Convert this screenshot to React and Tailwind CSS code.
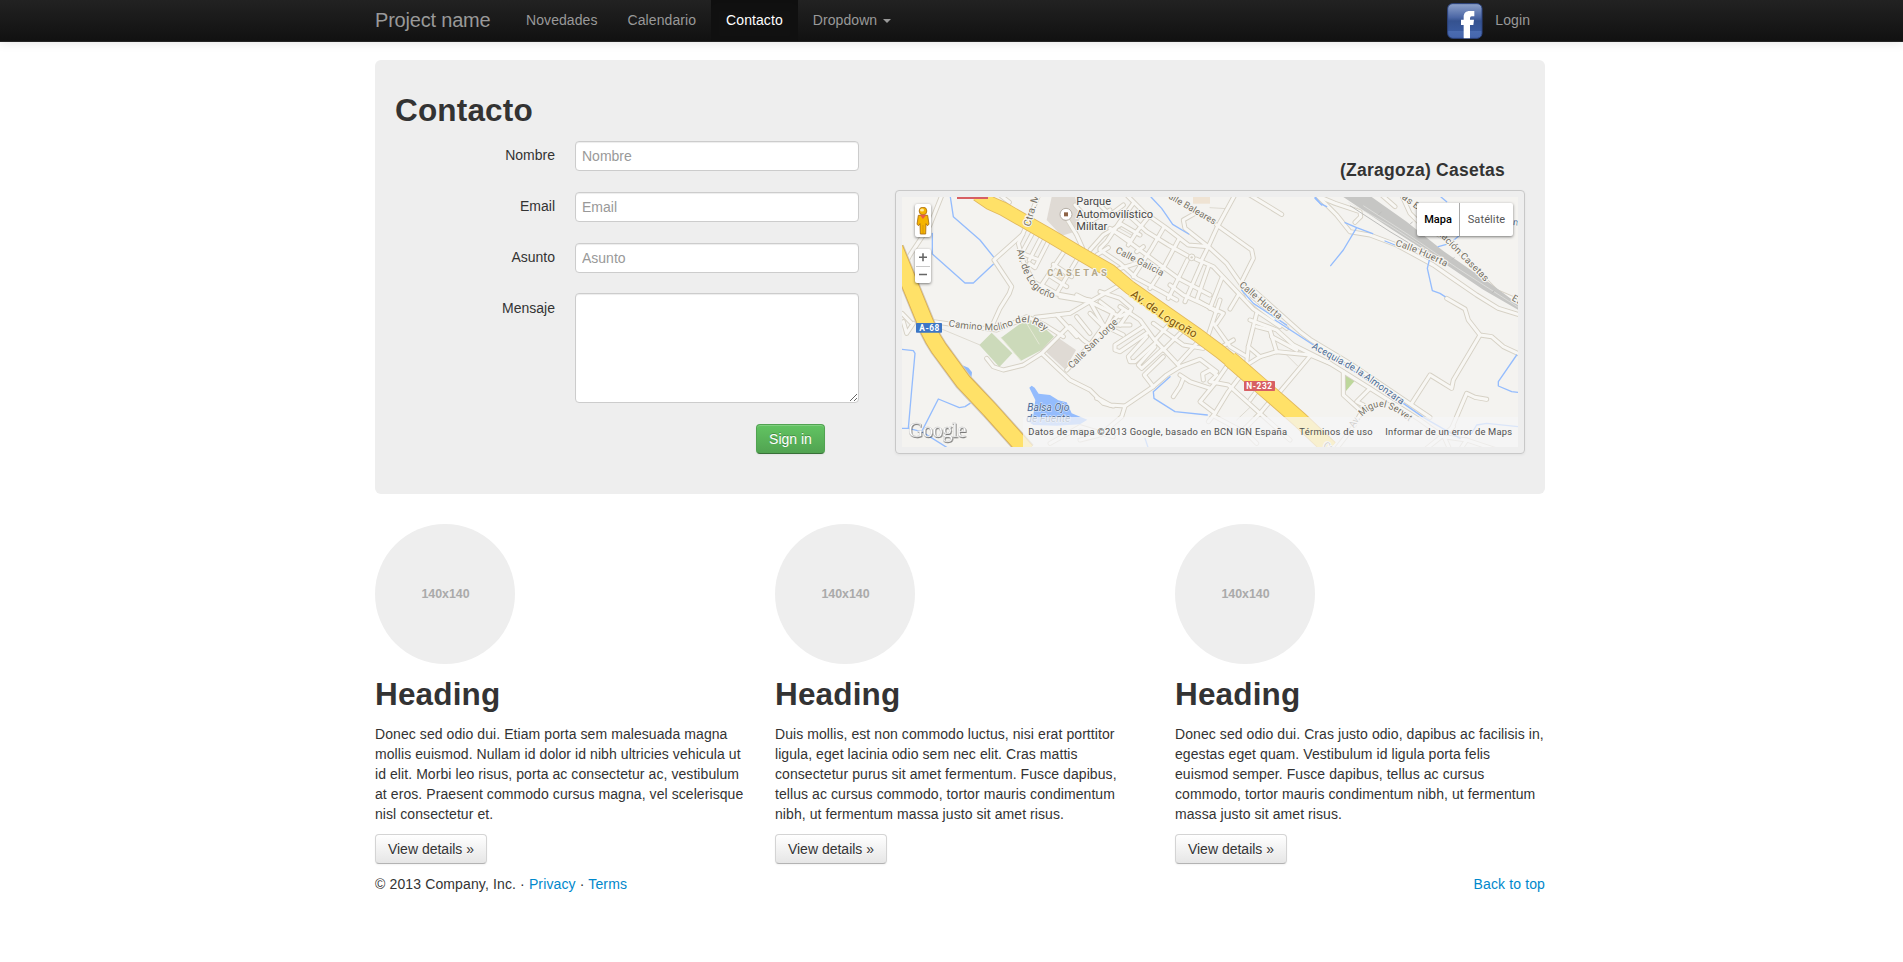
import React from "react";

/* Map geometry: [x offset, y offset, path], three units to a pixel. */
const ROADS = [
  [0, 0, "M160,20 L120,120 L60,210 L40,250"],
  [0, 0, "M398,148 L312,225 L365,305 L358,325 L330,370 L305,425"],
  [0, 0, "M450,20 L398,148 L385,175 L400,230 L430,290 L490,325 L600,345"],
  [0, 0, "M330,30 L358,52"],
  [0, 0, "M430,140 L395,205 L440,222"],
  [0, 0, "M452,160 L418,225"],
  [0, 0, "M475,170 L435,248 L418,236"],
  [0, 0, "M522,200 L455,300 L500,325 L560,225"],
  [0, 0, "M490,238 L545,275"],
  [0, 0, "M475,270 L530,305"],
  [0, 0, "M530,100 L560,150 L578,190 L580,215"],
  [0, 0, "M555,60 L600,110 L660,75"],
  [0, 0, "M600,195 L640,150 L690,120"],
  [0, 0, "M620,210 L655,188"],
  [0, 0, "M600,350 L690,300"],
  [0, 0, "M510,335 L600,350 L540,385 L437,397"],
  [0, 0, "M600,350 L690,395 L720,380"],
  [0, 0, "M600,350 L640,420 L700,450"],
  [0, 0, "M560,330 L640,370"],
  [0, 0, "M36,385 L62,412"],
  [0, 405, "M130,5 L200,15 L320,30 L380,5 L410,-10 L465,15 L520,50"],
  [0, 405, "M290,115 L310,140 L340,150 L400,135 L455,100 L495,60 L530,25"],
  [0, 405, "M455,100 L540,180 L600,210 L640,250 L670,258"],
  [0, 405, "M530,150 L600,75 L700,-30"],
  [0, 405, "M40,5 L50,40 L70,10"],
  [0, 405, "M540,20 L580,60 L600,75"],
  [0, 405, "M560,-10 L600,40 M600,-20 L640,20 L600,75"],
  [0, 405, "M500,-15 L560,50"],
  [630, 0, "M410,20 L350,130 L325,185 L305,225"],
  [630, 0, "M325,185 L255,130 L250,105 L285,85"],
  [630, 0, "M350,120 L455,195 L460,220 L425,290"],
  [630, 0, "M325,185 L380,235 L425,300 L445,340 L480,370 L560,430"],
  [630, 0, "M450,30 L545,88"],
  [630, 0, "M70,20 L130,80 L200,130 L265,180 L325,185"],
  [630, 0, "M85,90 L140,140 L205,180 L262,212 M288,222 L340,245 L425,335 L460,372 L540,425"],
  [630, 0, "M30,130 L100,180 L160,225 L235,280 L330,330"],
  [630, 0, "M0,195 L60,235 L110,280 L185,320 L230,345"],
  [630, 0, "M100,55 L60,110 L20,170 L0,190"],
  [630, 0, "M150,90 L110,140 L85,180"],
  [630, 0, "M190,130 L155,190 L100,275"],
  [630, 0, "M238,160 L195,240 L150,310"],
  [630, 0, "M262,225 L240,270 L205,340"],
  [630, 0, "M305,235 L270,315 L255,350"],
  [630, 0, "M325,245 L290,345 L350,380"],
  [630, 0, "M365,280 L330,370"],
  [630, 0, "M415,330 L390,372"],
  [630, 0, "M210,300 L250,330 L370,385 L350,415"],
  [630, 0, "M45,140 L90,165 M60,115 L120,150"],
  [630, 0, "M110,200 L130,185"],
  [630, 0, "M0,320 L60,340 L95,370 L60,420"],
  [630, 0, "M0,350 L40,380 L20,420 L90,420"],
  [630, 0, "M30,260 L110,235"],
  [630, 0, "M0,60 L30,90 L70,60"],
  [1260, 0, "M20,30 L80,90 L120,140 L180,150 L260,180 L370,240 L420,275 L500,330 L565,370 L630,390"],
  [1260, 0, "M30,36 L75,55 L150,80 L152,95 L135,112"],
  [1260, 0, "M215,30 L255,65"],
  [1260, 0, "M275,30 L300,85 L330,115 L420,170 L520,280 L560,320 L630,350"],
  [1260, 0, "M410,340 L465,372 L475,405 L510,450 L545,455 L580,485 L630,508"],
  [1260, 405, "M510,45 L430,180 L425,205 L360,165 L305,250"],
  [1260, 405, "M425,325 L470,220 L495,232 L530,238"],
  [1260, 405, "M-170,-90 L-30,35 L0,58 L120,130 L360,292"],
  [1260, 405, "M-180,0 L-100,30 L-50,75 L60,130 L100,155 L180,205 L330,300 L400,350 L470,360 L560,390"],
  [1260, 405, "M100,155 L100,225 L155,275 L130,320 L80,385"],
  [1260, 405, "M180,205 L140,245 L160,255"],
  [1260, 405, "M400,345 L430,320 M350,385 L400,345 L420,390 M470,360 L450,390"],
  [630, 405, "M440,135 L480,110 L530,95 L630,105 L690,130"],
  [630, 405, "M470,-20 L445,80 L440,130"],
  [630, 405, "M445,80 L480,110 M470,20 L510,30 L530,95"],
  [630, 405, "M515,50 L590,90"],
  [630, 405, "M630,108 L540,215"],
  [630, 405, "M60,-40 L120,0 L160,55 L240,140 L300,118 L350,155"],
  [630, 405, "M240,165 L270,185 L330,205"],
  [630, 405, "M310,180 L308,162 L330,150 L350,165 L330,185 L385,195 L480,280 L570,360"],
  [630, 405, "M390,125 L345,190 L300,245 L345,280 L325,305"],
  [630, 405, "M435,150 L385,215 L345,280"],
  [630, 405, "M530,220 L480,280 L430,330 L470,370"],
  [630, 405, "M480,200 L450,240"],
  [630, 405, "M345,290 L420,330"],
  [630, 405, "M250,175 L240,200 L220,230"],
  [630, 405, "M240,140 L200,165 L160,200 L75,258 L30,255 L0,238 L-10,235"],
  [630, 405, "M160,200 L133,165 L190,110"],
  [630, 405, "M130,20 L45,75 L45,90 L60,95 L140,40"],
  [630, 405, "M140,50 L85,110 L90,125 L105,125 L165,70"],
  [630, 405, "M165,80 L115,135 L125,145 L185,90"],
  [630, 405, "M215,5 L165,60 M250,30 L190,90 M290,70 L235,130"],
  [630, 405, "M160,10 L250,75 L310,85"],
  [630, 405, "M360,-60 L320,60"],
  [630, 405, "M400,60 L350,90 M340,10 L390,80 L440,110"],
  [630, 405, "M75,258 L65,290 L0,345 L-60,360"],
  [630, 405, "M-150,370 L-60,320 L40,350"],
];

const THIN = [
  [630, 0, "M330,68 L380,71"],
  [630, 0, "M50,125 L95,150 M56,118 L100,142"],
  [630, 405, "M550,95 L592,137"],
  [630, 405, "M410,300 L450,262"],
  [0, 405, "M150,25 L270,75"],
];

const WATER = [
  [0, 0, "M181,36 L190,95 L270,165 L310,215 M310,238 L250,294 L225,294 L127,207 L127,145"],
  [0, 405, "M36,88 L70,92 L75,100 L65,210 L55,325 L36,325 M55,325 L95,335 M240,250 L225,260 L208,263 L145,237 L95,335 L170,382"],
  [630, 0, "M153,36 L185,70 L218,118 L266,147"],
  [630, 0, "M645,36 L665,60"],
  [630, 0, "M425,315 L460,355 L560,420"],
  [1260, 0, "M15,40 L30,55 L50,65 M105,113 L140,128 L188,146 M140,128 L100,195 L62,242 M225,168 L255,180"],
  [1260, 0, "M358,225 L352,250 L367,317 L390,325 L405,335 M385,185 L420,175 L450,150 M393,36 L410,50"],
  [1260, 405, "M620,105 L565,185 L565,198 L605,215 L625,217 M-105,0 L280,250 L340,292 L450,355 M485,340 L500,315 L530,310 L625,320"],
  [630, 405, "M210,170 L160,215 L162,235 L225,275 L322,285 M135,355 L145,385"],
];

function Lines({ list, stroke, width }) {
  return (
    <g fill="none" stroke={stroke} strokeWidth={width} strokeLinejoin="round" strokeLinecap="round">
      {list.map(([x, y, d], i) => (
        <path key={i} d={d} transform={`translate(${x} ${y})`} />
      ))}
    </g>
  );
}

function PathLabel({ id, d, length, children, size = 30, fill = "#746f62", weight = 400, halo = "#f6f5f2" }) {
  return (
    <>
      <path id={id} d={d} fill="none" />
      <text
        fontSize={size}
        fontWeight={weight}
        fill={fill}
        stroke={halo}
        strokeWidth="7"
        strokeLinejoin="round"
        paintOrder="stroke"
        textLength={length}
        lengthAdjust="spacingAndGlyphs"
      >
        <textPath href={`#${id}`}>{children}</textPath>
      </text>
    </>
  );
}

const HIGHWAY = "M262,28 L300,54 L340,72 L480,152 L560,200 L660,258 L720,308 L830,385 L920,448 L990,500 L1070,565";
const HIGHWAY_END = "M1020,522 L1070,565 L1110,600 L1170,652 L1230,705 L1320,790";
const A68 = "M15,190 L60,300 L103,405 Q125,465 165,515 L220,590 L300,675 L410,798";

function MapDrawing() {
  return (
    <svg className="block h-full w-full" viewBox="36 36 1848 750" fontFamily="Roboto, sans-serif">
      <rect x="36" y="36" width="1848" height="750" fill="#f4f3f0" />
      <path d="M485,36 L555,36 L572,95 L550,142 L515,152 L470,105 Z" fill="#dfdad4" />
      <path d="M909,36 h51 v20 h-51 Z" fill="#efe3d3" />
      <path d="M495,265 L515,255 L530,275 L508,288 Z" fill="#f3e6d2" />
      <path d="M268,480 L305,443 L367,505 L328,546 Z M333,458 L385,420 L425,392 L492,455 L455,495 L393,527 Z" fill="#ccdaba" />
      <path d="M465,498 L500,455 L558,495 L525,553 Z" fill="#dfdad4" />
      <path d="M1363,568 L1398,583 L1368,618 Z" fill="#bdd79b" />
      <Lines list={THIN} stroke="#d9d5ca" width={2.5} />
      <Lines list={ROADS} stroke="#d6d1c5" width={15} />
      <Lines list={ROADS} stroke="#f8f7f4" width={9.5} />
      <path d="M405,407 L448,478 M333,458 L393,527" stroke="#e5e9d6" strokeWidth="3" />
      <circle cx="905" cy="217" r="10" fill="#f8f7f4" stroke="#d6d1c5" strokeWidth="3" />
      <circle cx="905" cy="217" r="3.5" fill="#d6d1c5" />
      <path
        d="M1360,36 L1445,36 L1550,110 L1660,198 L1800,295 L1885,358 L1885,375 L1780,314 L1640,220 L1500,130 Z"
        fill="#c6c6c4"
      />
      <g stroke="#e6e5e2" strokeWidth="2" fill="none">
        <path d="M1375,52 L1500,122 L1620,200 M1420,62 L1560,152 L1700,248 L1885,367" />
      </g>
      <path
        d="M1380,62 L1500,140 L1600,200 M1465,90 l10,-10 M1560,118 l8,-8 M1685,225 l8,-8 M1805,325 l8,-8"
        stroke="#bdbdbb"
        strokeWidth="3"
        fill="none"
      />
      <Lines list={WATER} stroke="#94bcfd" width={4} />
      <path d="M203,535 L235,548 L246,562 L244,580 L232,578 Z" fill="#8fb9fb" />
      <path
        d="M418,608 L425,602 L434,608 L446,626 L480,630 L505,646 L530,652 L545,685 L592,704 L570,718 L500,722 L430,720 L415,710 L430,690 L436,645 Z"
        fill="#94bcfd"
      />
      <g fill="none">
        <path d={HIGHWAY} stroke="#e2b95c" strokeWidth="43" />
        <path d={HIGHWAY_END} stroke="#e2b95c" strokeWidth="50" />
        <path d={A68} stroke="#cfcabf" strokeWidth="56" />
        <path d={A68} stroke="#dcae4f" strokeWidth="51" />
        <path d={HIGHWAY} stroke="#ffe168" strokeWidth="38" />
        <path d={HIGHWAY_END} stroke="#ffe168" strokeWidth="45" />
        <path d={A68} stroke="#ffe168" strokeWidth="46" />
      </g>
      <rect x="201" y="30" width="93" height="12" rx="1" fill="#d75f63" />

      <PathLabel id="ctra" d="M420,126 L448,30" length={100} size={30}>Ctra. M</PathLabel>
      <PathLabel id="logrono" d="M380,195 C392,245 408,290 440,318 Q470,342 510,341" length={196} size={30}>
        Av. de Logroño
      </PathLabel>
      <text
        x="472"
        y="272"
        fontSize="28"
        fontWeight="700"
        fill="#b3a88c"
        stroke="#f6f5f2"
        strokeWidth="6"
        paintOrder="stroke"
        textLength="178"
      >
        CASETAS
      </text>
      <PathLabel id="baleares" d="M818,30 L975,121" length={178} size={28}>Calle Baleares</PathLabel>
      <PathLabel id="galicia" d="M675,202 L818,275" length={158} size={28}>Calle Galicia</PathLabel>
      <PathLabel id="huerta1" d="M1046,302 L1168,405" length={158} size={28}>Calle Huerta</PathLabel>
      <PathLabel id="huerta2" d="M1515,182 Q1590,205 1665,244" length={165} size={28}>Calle Huerta</PathLabel>
      <PathLabel id="estacion" d="M1646,150 L1788,293" length={198} size={28}>tación Casetas</PathLabel>
      <PathLabel id="lasb" d="M1534,40 L1600,88" length={60} size={28}>as B</PathLabel>
      <PathLabel id="este" d="M1864,345 L1900,365" size={28}>Es</PathLabel>
      <PathLabel id="molino" d="M175,424 Q250,437 320,436 C355,432 370,414 400,412 C425,411 445,422 474,446" length={302} size={29}>
        Camino Molino del Rey
      </PathLabel>
      <PathLabel id="jorge" d="M546,552 L692,406" length={196} size={29}>Calle San Jorge</PathLabel>
      <PathLabel id="avlogrono" d="M720,332 L830,412 L918,462" length={232} size={34} fill="#7d5409" halo="#ffe88b">
        Av. de Logroño
      </PathLabel>
      <PathLabel id="acequia" d="M1264,489 L1400,565 L1543,665" length={320} size={29} fill="#4a6b96">
        Acequia de la Almonzara
      </PathLabel>
      <PathLabel id="servet" d="M1392,730 Q1425,670 1470,665 Q1510,668 1562,714" length={205} size={29}>
        Av. Miguel Servet
      </PathLabel>
      <PathLabel id="cr" d="M1298,785 L1330,805" size={28}>Cr</PathLabel>
      <PathLabel id="ind" d="M1868,120 L1900,124" size={28} fill="#4a6b96">nd</PathLabel>

      <g fill="#474747" stroke="#f6f5f2" strokeWidth="6" paintOrder="stroke" fontSize="33" strokeLinejoin="round">
        <text x="559" y="60" textLength="104" lengthAdjust="spacingAndGlyphs">Parque</text>
        <text x="559" y="98" textLength="230" lengthAdjust="spacingAndGlyphs">Automovilístico</text>
        <text x="559" y="135" textLength="93" lengthAdjust="spacingAndGlyphs">Militar</text>
      </g>
      <circle cx="528" cy="88" r="18" fill="#fff" stroke="#b5aea5" strokeWidth="3" />
      <rect x="522" y="82" width="12" height="12" fill="#8d6346" />
      <g fontStyle="italic" fill="#4c6a92" stroke="#e4edfa" strokeWidth="3" paintOrder="stroke" fontSize="30">
        <text x="412" y="679" textLength="126" lengthAdjust="spacingAndGlyphs">Balsa Ojo</text>
        <text x="409" y="711" textLength="132" lengthAdjust="spacingAndGlyphs">de Fuente</text>
      </g>
      <rect x="78" y="414" width="78" height="29" rx="2" fill="#3d76c5" />
      <text x="88" y="438" fontSize="25" fontWeight="700" fill="#fff" textLength="60">A-68</text>
      <rect x="1062" y="588" width="93" height="30" rx="2" fill="#d75f63" />
      <text x="1069" y="612" fontSize="25" fontWeight="700" fill="#fff" textLength="77">N-232</text>
      <rect x="399" y="696" width="1485" height="90" fill="#f5f5f7" opacity="0.72" />
      <text
        className="[filter:drop-shadow(2px_3px_1px_rgba(0,0,0,0.5))]"
        x="55"
        y="755"
        fontFamily="'Liberation Serif', serif"
        fontSize="62"
        fill="#fff"
        stroke="#c4c4c4"
        strokeWidth="1"
        textLength="174"
      >
        Google
      </text>
      <g fontSize="28" fill="#505050">
        <text x="415" y="750" textLength="776" lengthAdjust="spacing">
          Datos de mapa ©2013 Google, basado en BCN IGN España
        </text>
        <text x="1228" y="750" textLength="220">Términos de uso</text>
        <text x="1486" y="750" textLength="380">Informar de un error de Maps</text>
      </g>
    </svg>
  );
}

function Pegman() {
  return (
    <svg className="h-[28px] w-[14px]" viewBox="0 0 42 84">
      <g fill="#f5b400" stroke="#a86b10" strokeWidth="2.5" strokeLinejoin="round">
        <path d="M7,25 H35 L39,52 L34,56 L30,50 L29,81 H13 L12,50 L8,56 L3,52 Z" />
        <circle cx="21" cy="12" r="11.5" />
      </g>
      <path d="M21,54 V80" stroke="#c98a10" strokeWidth="2" />
      <path d="M11,23 H31 L21,36 Z" fill="#e85a4a" />
      <ellipse cx="18" cy="9" rx="6" ry="4.5" fill="#fde9a0" />
    </svg>
  );
}

function FacebookIcon() {
  return (
    <svg className="h-9 w-9" viewBox="0 0 108 108">
      <defs>
        <linearGradient id="fbg" x1="0" y1="0" x2="0" y2="1">
          <stop offset="0" stopColor="#8fa3cb" />
          <stop offset="0.4" stopColor="#4b66a5" />
          <stop offset="0.5" stopColor="#35528f" />
          <stop offset="0.78" stopColor="#3a5a9e" />
          <stop offset="0.8" stopColor="#4a6bb0" />
          <stop offset="1" stopColor="#4565ac" />
        </linearGradient>
      </defs>
      <rect x="2" y="2" width="103" height="104" rx="15" fill="url(#fbg)" stroke="#2c4480" strokeWidth="3" />
      <path
        d="M50,106 V66 H42 V50 H50 V42 C50,30 57,24 68,24 H82 V40 H74 Q69,40 69,46 V50 H81 L79,66 H69 V106 Z"
        fill="#fff"
      />
    </svg>
  );
}

function NavLink({ children, active }) {
  return (
    <a
      href="#"
      className={
        active
          ? "block h-[41px] bg-[#111] px-[15px] py-[10px] text-white shadow-[inset_0_3px_8px_rgba(0,0,0,0.125)]"
          : "block h-[41px] px-[15px] py-[10px] text-[#999]"
      }
    >
      {children}
    </a>
  );
}

function Field({ label, children, tall }) {
  return (
    <div className={tall ? "flex h-[132px]" : "flex h-[51px]"}>
      <label className="w-[160px] pt-[5px] text-right">{label}</label>
      <div className={tall ? "ml-5" : "ml-5 pt-px"}>{children}</div>
    </div>
  );
}

const FIELD_BOX =
  "block w-[284px] rounded-[4px] border border-[#ccc] bg-white px-[6px] py-[4px] leading-5 placeholder:text-[#999] placeholder:opacity-100 shadow-[inset_0_1px_1px_rgba(0,0,0,0.075)] outline-none";

const COLUMNS = [
  [
    "Donec sed odio dui. Etiam porta sem malesuada magna",
    "mollis euismod. Nullam id dolor id nibh ultricies vehicula ut",
    "id elit. Morbi leo risus, porta ac consectetur ac, vestibulum",
    "at eros. Praesent commodo cursus magna, vel scelerisque",
    "nisl consectetur et.",
  ],
  [
    "Duis mollis, est non commodo luctus, nisi erat porttitor",
    "ligula, eget lacinia odio sem nec elit. Cras mattis",
    "consectetur purus sit amet fermentum. Fusce dapibus,",
    "tellus ac cursus commodo, tortor mauris condimentum",
    "nibh, ut fermentum massa justo sit amet risus.",
  ],
  [
    "Donec sed odio dui. Cras justo odio, dapibus ac facilisis in,",
    "egestas eget quam. Vestibulum id ligula porta felis",
    "euismod semper. Fusce dapibus, tellus ac cursus",
    "commodo, tortor mauris condimentum nibh, ut fermentum",
    "massa justo sit amet risus.",
  ],
];

export default function App() {
  return (
    <div className="h-[962px] overflow-hidden bg-white font-['Liberation_Sans',Arial,sans-serif] text-[14px] leading-5 text-[#333]">
      <header className="h-[42px] border-b border-[#252525] bg-linear-to-b from-[#222] to-[#111] pl-[375px] shadow-[0_1px_10px_rgba(0,0,0,0.1)]">
        <div className="flex w-[1170px]">
          <a href="#" className="w-[136px] whitespace-nowrap py-[10px] text-[20px] tracking-[-0.2px] text-[#999]">
            Project name
          </a>
          <nav className="flex tracking-[0.08px]">
            <NavLink>Novedades</NavLink>
            <NavLink>Calendario</NavLink>
            <NavLink active>Contacto</NavLink>
            <NavLink>
              <span className="flex items-center">
                Dropdown
                <span className="ml-[6px] mt-[1px] border-x-4 border-t-4 border-x-transparent border-t-[#999]" />
              </span>
            </NavLink>
          </nav>
          <div className="ml-auto flex">
            <a href="#" className="pt-[3px]"><FacebookIcon /></a>
            <a href="#" className="py-[10px] pl-[12px] pr-[15px] tracking-[0.08px] text-[#999]">Login</a>
          </div>
        </div>
      </header>

      <main className="ml-[375px] w-[1170px] pt-[18px]">
        <section className="flex h-[434px] rounded-[6px] bg-[#eee] px-5 pt-[30px]">
          <form className="w-[500px]">
            <h2 className="mb-[10px] text-[31.5px] font-bold leading-10 tracking-[0.17px]">Contacto</h2>
            <Field label="Nombre">
              <input className={FIELD_BOX} placeholder="Nombre" />
            </Field>
            <Field label="Email">
              <input className={FIELD_BOX} placeholder="Email" />
            </Field>
            <Field label="Asunto">
              <input className={FIELD_BOX} placeholder="Asunto" />
            </Field>
            <Field label="Mensaje" tall>
              <textarea className={FIELD_BOX + " h-[110px] resize"} />
            </Field>
            <button
              type="button"
              className="ml-[361px] mt-[-1px] block h-[30px] w-[69px] rounded-[4px] border border-[#51a351] border-b-[#387038] bg-linear-to-b from-[#62c462] to-[#51a351] text-center text-white shadow-[inset_0_1px_0_rgba(255,255,255,0.2),0_1px_2px_rgba(0,0,0,0.05)] [text-shadow:0_-1px_0_rgba(0,0,0,0.25)]"
            >
              Sign in
            </button>
          </form>

          <div className="w-[630px] pt-[70px]">
            <h4 className="mb-[10px] pr-5 text-right text-[17.5px] font-bold leading-5 tracking-[0.25px]">
              (Zaragoza) Casetas
            </h4>
            <div className="relative h-[264px] w-[630px] rounded-[4px] border border-[#c8c8c8] p-[6px] shadow-[0_1px_3px_rgba(0,0,0,0.055)]">
              <MapDrawing />
              <div className="absolute left-[19px] top-[13px] flex h-[33px] w-[16px] items-center justify-center rounded-[2px] bg-white shadow-[0_1px_3px_rgba(0,0,0,0.5)]">
                <Pegman />
              </div>
              <div className="absolute left-[19px] top-[58px] flex h-[34px] w-[16px] flex-col items-center rounded-[2px] bg-white shadow-[0_1px_3px_rgba(0,0,0,0.5)]">
                <svg className="h-[34px] w-[16px]" viewBox="0 0 16 34" fill="#666">
                  <path d="M4,7.5 h8 v1.6 h-8 Z M7.2,4.3 h1.6 v8 h-1.6 Z M4,24.7 h8 v1.6 h-8 Z" />
                  <path d="M1,17.2 h14 v0.8 h-14 Z" fill="#bbb" />
                </svg>
              </div>
              <div className="absolute left-[521px] top-[12px] flex h-[33px] w-[96px] rounded-[2px] bg-white text-center font-[Roboto,sans-serif] text-[11px] leading-[33px] shadow-[0_1px_3px_rgba(0,0,0,0.5)]">
                <span className="w-[43px] border-r border-[#aaa] font-medium text-black">Mapa</span>
                <span className="grow tracking-[0.1px] text-[#565656]">Satélite</span>
              </div>
            </div>
          </div>
        </section>

        <section className="mt-[30px] flex gap-[30px]">
          {COLUMNS.map((lines, i) => (
            <article key={i} className="w-[370px]">
              <div className="flex h-[140px] w-[140px] items-center justify-center rounded-full bg-[#eee] pl-px text-[12.4px] font-bold text-[#aaa]">
                140x140
              </div>
              <h2 className="my-[10px] text-[31.5px] font-bold leading-10 tracking-[0.15px]">Heading</h2>
              <p className="mb-[10px] whitespace-nowrap tracking-[0.075px]">
                {lines.map((line) => (
                  <span key={line} className="block">{line}</span>
                ))}
              </p>
              <a
                href="#"
                className="block h-[30px] w-[112px] rounded-[4px] border border-[#d4d4d4] border-b-[#b3b3b3] bg-linear-to-b from-white to-[#e6e6e6] pt-[4px] text-center shadow-[inset_0_1px_0_rgba(255,255,255,0.2),0_1px_2px_rgba(0,0,0,0.05)] [text-shadow:0_1px_1px_rgba(255,255,255,0.75)]"
              >
                View details »
              </a>
            </article>
          ))}
        </section>

        <footer className="mt-[10px] flex justify-between tracking-[0.13px]">
          <p>
            © 2013 Company, Inc. · <a href="#" className="text-[#08c]">Privacy</a> ·{" "}
            <a href="#" className="text-[#08c]">Terms</a>
          </p>
          <a href="#" className="text-[#08c]">Back to top</a>
        </footer>
      </main>
    </div>
  );
}
